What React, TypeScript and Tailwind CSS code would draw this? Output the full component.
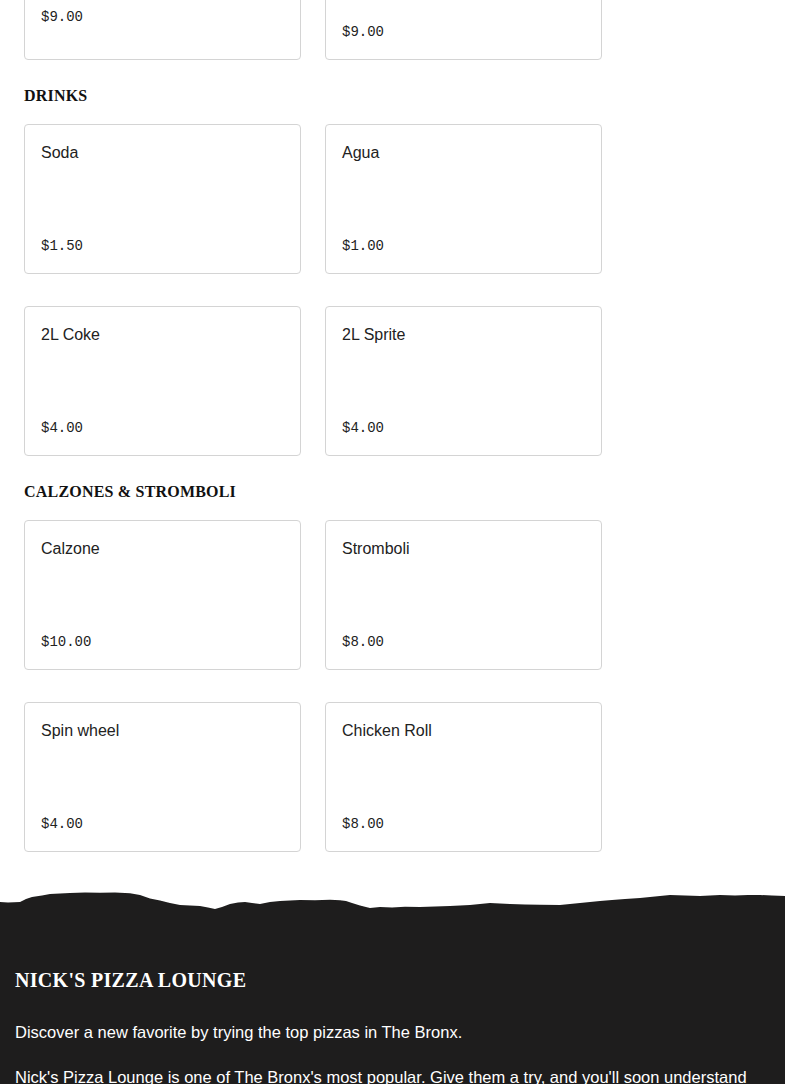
import React from "react";

type Item = { name: string; price: string };

const sans = { fontFamily: '"Liberation Sans", Arial, sans-serif' };

function Card({ item, spacer }: { item: Item; spacer?: boolean }) {
  return (
    <div className="h-[150px] border border-[#d4d4d4] rounded-[4px] bg-white px-4 pt-[17px] pb-[15px] flex flex-col justify-between">
      <div className="font-['Liberation_Sans',Arial,sans-serif] text-[16px] leading-[22px] text-[#222]">{item.name}</div>
      <div>
        <div className="font-['Liberation_Mono','Courier_New',monospace] text-[14px] leading-6 text-[#222]">{item.price}</div>
        {spacer ? <div className="h-[15px]" /> : null}
      </div>
    </div>
  );
}

function Grid({ items, first }: { items: Item[]; first?: boolean }) {
  return (
    <div className="grid grid-cols-[277px_277px] gap-x-6 gap-y-8">
      {items.map((it, i) => (
        <Card key={i} item={it} spacer={first && i === 0} />
      ))}
    </div>
  );
}

function Heading({ children }: { children: React.ReactNode }) {
  return (
    <h2 className="mt-6 mb-4 font-['Liberation_Serif','Times_New_Roman',serif] font-bold text-[16px] leading-6 text-[#111] tracking-[0.2px]">
      {children}
    </h2>
  );
}

const edge =
  "M0,14 L8,14.5 L20,14 L26,11 L32,9 L42,7.5 L50,6 L60,5.5 L70,5 L85,4.6 L100,4.8 L115,4.5 L130,5.2 L140,7 L150,10.5 L160,12.5 L170,15 L180,17 L190,17.5 L200,18 L208,19.5 L215,21 L222,19 L230,16 L238,14.5 L245,14 L252,15 L260,16 L270,14 L280,13 L290,12.4 L300,12 L315,12.3 L330,11.8 L340,12.2 L346,13 L352,15 L360,17.5 L370,20 L380,19 L392,19.4 L405,18.8 L420,19 L435,18.6 L450,18 L460,17.4 L470,17 L480,16 L490,15 L500,15.6 L510,16 L525,16.6 L540,16.8 L560,17 L575,15.6 L590,14 L600,13 L612,12 L625,11 L640,10 L655,8.6 L670,7 L685,7.6 L700,8 L710,7.4 L720,7 L735,7.6 L748,7 L760,7 L772,7.6 L785,8 L785,24 L0,24 Z";

export default function App() {
  const top: Item[] = [
    { name: "", price: "$9.00" },
    { name: "", price: "$9.00" },
  ];
  const drinks: Item[] = [
    { name: "Soda", price: "$1.50" },
    { name: "Agua", price: "$1.00" },
    { name: "2L Coke", price: "$4.00" },
    { name: "2L Sprite", price: "$4.00" },
  ];
  const calzones: Item[] = [
    { name: "Calzone", price: "$10.00" },
    { name: "Stromboli", price: "$8.00" },
    { name: "Spin wheel", price: "$4.00" },
    { name: "Chicken Roll", price: "$8.00" },
  ];
  return (
    <div className="bg-white min-h-[1084px] overflow-hidden" style={sans}>
      <div className="px-6">
        <div className="-mt-[90px]">
          <Grid items={top} first />
        </div>
        <Heading>DRINKS</Heading>
        <Grid items={drinks} />
        <Heading>CALZONES &amp; STROMBOLI</Heading>
        <Grid items={calzones} />
      </div>
      <div className="mt-9">
        <svg className="block w-full h-[24px]" viewBox="0 0 785 24" preserveAspectRatio="none">
          <path d={edge} fill="#1e1d1d" />
        </svg>
        <div className="bg-[#1e1d1d] px-[15px] pt-[54px] pb-10 text-white">
          <h2 className="font-['Liberation_Serif','Times_New_Roman',serif] font-bold text-[20px] leading-7 tracking-[0.3px]">
            NICK'S PIZZA LOUNGE
          </h2>
          <p className="mt-[26px] text-[16.5px] leading-6 font-['Liberation_Sans',Arial,sans-serif]">
            Discover a new favorite by trying the top pizzas in The Bronx.
          </p>
          <p className="mt-[21px] text-[16.5px] leading-6 font-['Liberation_Sans',Arial,sans-serif]">
            <span className="whitespace-nowrap">Nick's Pizza Lounge is one of The Bronx's most popular. Give them a try, and you'll soon understand</span>
            <br />
            why.
          </p>
        </div>
      </div>
    </div>
  );
}
